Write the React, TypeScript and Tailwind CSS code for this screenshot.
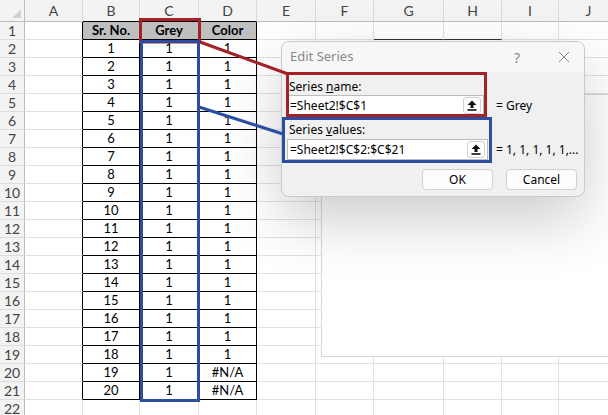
import React from "react";

const cols = [
  { label: "", w: "w-[25px]" },
  { label: "A", w: "w-[58px]" },
  { label: "B", w: "w-[57px]" },
  { label: "C", w: "w-[59px]" },
  { label: "D", w: "w-[58px]" },
  { label: "E", w: "w-[59px]" },
  { label: "F", w: "w-[58px]" },
  { label: "G", w: "w-[70px]" },
  { label: "H", w: "w-[58px]" },
  { label: "I", w: "w-[57px]" },
  { label: "J", w: "w-[60px]" },
];

// values for B, C, D in rows 1..21
const tableRows: string[][] = [["Sr. No.", "Grey", "Color"]];
for (let i = 1; i <= 20; i++) {
  tableRows.push([String(i), "1", i >= 19 ? "#N/A" : "1"]);
}

function HeaderRow() {
  return (
    <div className="flex h-[22px]">
      {cols.map((c, i) => {
        const inTable = i >= 2 && i <= 4;
        return (
          <div
            key={i}
            className={`${c.w} shrink-0 h-full relative flex items-center justify-center bg-[#f3f3f3] text-[14px] text-[#444] border-b ${
              inTable ? "border-b-black" : "border-b-[#bdbdbd]"
            } ${i === 0 ? "border-r border-r-[#bdbdbd]" : "border-r border-r-[#dadada]"}`}
          >
            {i === 0 ? (
              <div className="absolute right-[3px] bottom-[3px] w-0 h-0 border-l-[9px] border-l-transparent border-b-[9px] border-b-[#d2d2d2]" />
            ) : (
              c.label
            )}
          </div>
        );
      })}
    </div>
  );
}

function SheetRow({ r }: { r: number }) {
  const data = r <= 21 ? tableRows[r - 1] : null;
  return (
    <div className="flex h-[18px]">
      {cols.map((c, i) => {
        if (i === 0) {
          return (
            <div
              key={i}
              className={`${c.w} shrink-0 h-full flex items-center justify-center bg-[#f3f3f3] text-[14px] text-[#444] border-r border-r-[#bdbdbd] border-b border-b-[#dcdcdc]`}
            >
              {r}
            </div>
          );
        }
        const inTable = data !== null && i >= 2 && i <= 4;
        const rightBlack = data !== null && i >= 1 && i <= 4;
        const darkBottom = r === 1 && (i === 7 || i === 8);
        const isHead = r === 1 && inTable;
        return (
          <div
            key={i}
            className={`${c.w} shrink-0 h-full flex items-center justify-center text-[13px] leading-none text-black border-r border-b ${
              rightBlack ? "border-r-black" : "border-r-[#e1e1e1]"
            } ${
              inTable ? "border-b-black" : darkBottom ? "border-b-[#333]" : "border-b-[#e1e1e1]"
            } ${isHead ? "bg-[#bfbfbf] font-bold" : ""}`}
          >
            {inTable ? data![i - 2] : ""}
          </div>
        );
      })}
    </div>
  );
}

function UploadIcon() {
  return (
    <div className="absolute right-[2px] top-[1px] w-[18px] h-[17px] rounded-[3px] border border-[#cfcfcf] bg-white flex items-center justify-center">
      <svg width="10" height="11" viewBox="0 0 10 11">
        <path d="M5 0.5 L9.5 5 H6.5 V8 H3.5 V5 H0.5 Z" fill="#111" />
        <rect x="0.5" y="9.2" width="9" height="1.6" fill="#111" />
      </svg>
    </div>
  );
}

function Dialog() {
  return (
    <div className="absolute left-[281px] top-[41px] w-[304px] h-[156px] rounded-[8px] border border-[#c9c9c9] bg-[#f0f0f0] shadow-[0_24px_60px_rgba(0,0,0,0.2)] overflow-hidden text-[12px] text-black">
      <div className="h-[30px] bg-[#f7f7f7] flex items-center pl-[8px] pr-[14px]">
        <span className="text-[#888] text-[13px]">Edit Series</span>
        <span className="ml-auto text-[#888] text-[14px] w-[12px] text-center">?</span>
        <svg className="ml-[35px]" width="12" height="12" viewBox="0 0 12 12">
          <path d="M1 1 L11 11 M11 1 L1 11" stroke="#888" strokeWidth="1" />
        </svg>
      </div>
      <div className="pl-[5px] pt-[6px]">
        <div className="h-[17px] leading-[17px] pl-[2px]">
          Series <span className="underline">n</span>ame:
        </div>
        <div className="flex items-center h-[21px]">
          <div className="relative w-[197px] h-[21px] bg-white border border-[#bcbcbc] pl-[2px] leading-[19px]">
            =Sheet2!$C$1
            <UploadIcon />
          </div>
          <span className="ml-[12px]">= Grey</span>
        </div>
        <div className="h-[17px] leading-[17px] pl-[2px] mt-[5px]">
          Series <span className="underline">v</span>alues:
        </div>
        <div className="flex items-center h-[21px] mt-[1px]">
          <div className="relative w-[201px] h-[21px] bg-white border border-[#bcbcbc] pl-[2px] leading-[19px]">
            =Sheet2!$C$2:$C$21
            <UploadIcon />
          </div>
          <span className="ml-[8px]">= 1, 1, 1, 1, 1,...</span>
        </div>
        <div className="flex justify-end gap-[13px] pr-[7px] mt-[9px]">
          <button className="w-[71px] h-[21px] rounded-[4px] border border-[#d0d0d0] bg-[#fdfdfd] text-[12px]">OK</button>
          <button className="w-[71px] h-[21px] rounded-[4px] border border-[#d0d0d0] bg-[#fdfdfd] text-[12px]">Cancel</button>
        </div>
      </div>
    </div>
  );
}

export default function App() {
  const rows = Array.from({ length: 22 }, (_, i) => i + 1);
  return (
    <div className="relative w-[608px] h-[415px] overflow-hidden bg-white font-['Lato','Liberation_Sans',sans-serif]">
      <HeaderRow />
      {rows.map((r) => (
        <SheetRow key={r} r={r} />
      ))}

      {/* chart object behind the dialog */}
      <div className="absolute left-[321px] top-[94px] w-[300px] h-[263px] bg-white border border-[#d6d6d6]" />

      <div className="font-['Noto_Sans','Open_Sans',sans-serif]">
        <Dialog />
      </div>

      <svg className="absolute inset-0 pointer-events-none" width="608" height="415">
        <rect x="140.5" y="19.5" width="59" height="22.5" fill="none" stroke="#a52128" strokeWidth="3" />
        <rect x="141.5" y="41.5" width="57" height="359" fill="none" stroke="#2b4ea2" strokeWidth="3" />
        <line x1="200" y1="42" x2="288" y2="74" stroke="#a52128" strokeWidth="3" />
        <line x1="199" y1="107" x2="283" y2="134" stroke="#2b4ea2" strokeWidth="3" />
        <rect x="287.5" y="73.5" width="198" height="42" fill="none" stroke="#a52128" strokeWidth="3" />
        <rect x="283.5" y="118.5" width="207" height="43" fill="none" stroke="#2b4ea2" strokeWidth="3" />
      </svg>
    </div>
  );
}
